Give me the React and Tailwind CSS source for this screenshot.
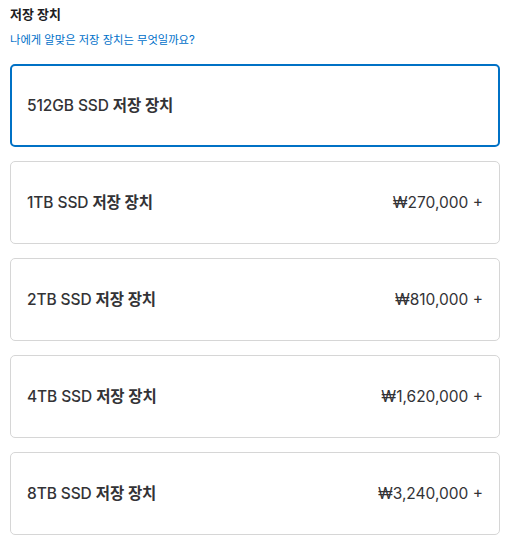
const options = [
  { size: "512GB", price: null, selected: true },
  { size: "1TB", price: "₩270,000 +" },
  { size: "2TB", price: "₩810,000 +" },
  { size: "4TB", price: "₩1,620,000 +" },
  { size: "8TB", price: "₩3,240,000 +" },
];

export default function App() {
  return (
    <div
      className="w-[506px] h-[537px] bg-white px-[10px] overflow-hidden"
      style={{ fontFamily: 'Inter, "Noto Sans CJK KR", sans-serif' }}
    >
      <h2 className="pt-[5px] h-[30px] text-[13px] font-bold text-[#1d1d1f] leading-[18px]">
        저장 장치
      </h2>
      <a className="block h-[34px] pt-[2px] text-[11.3px] text-[#0070c9] leading-[16px]">
        나에게 알맞은 저장 장치는 무엇일까요?
      </a>
      <div className="flex flex-col gap-[14px] w-[490px]">
        {options.map((o) => (
          <div
            key={o.size}
            className={`h-[83px] rounded-[5px] flex items-center justify-between ${
              o.selected
                ? "border-2 border-[#0071c5] px-[15px]"
                : "border border-[#d6d6d6] px-[16px]"
            }`}
          >
            <span className="text-[15.5px] font-medium text-[#333336] tracking-[-0.1px]">
              {o.size} SSD <span className="font-semibold">저장 장치</span>
            </span>
            {o.price && (
              <span className="text-[15.5px] text-[#333336]">{o.price}</span>
            )}
          </div>
        ))}
      </div>
    </div>
  );
}
